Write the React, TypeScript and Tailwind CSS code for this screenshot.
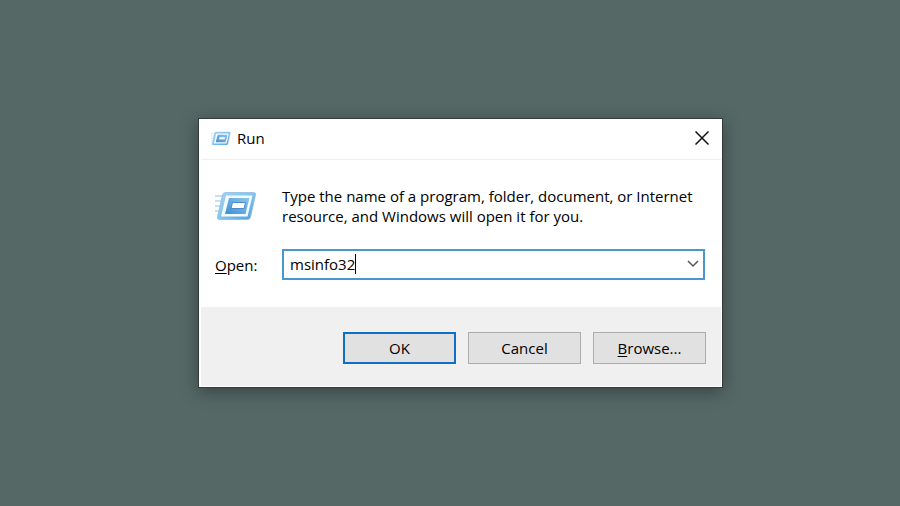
import { useState } from "react";

function RunIcon({ className }: { className: string }) {
  return (
    <svg viewBox="0 0 42 30" className={className} fill="none" aria-hidden>
      <defs>
        <linearGradient id="run-rim" x1="0" y1="0" x2="1" y2="1">
          <stop offset="0" stopColor="#a6d3f2" />
          <stop offset="0.5" stopColor="#84c3ec" />
          <stop offset="1" stopColor="#4b9cdb" />
        </linearGradient>
        <linearGradient id="run-face" x1="1" y1="0" x2="0" y2="1">
          <stop offset="0" stopColor="#8cc6ee" />
          <stop offset="1" stopColor="#3d8fd4" />
        </linearGradient>
      </defs>
      <path d="M0 5h9M0 10h8M0 15h6M0 20h5" stroke="#b4d8f2" strokeWidth="1.300" />
      <path
        d="M10.500 1.500h28q2.500 0 2 2.500l-5 22q-.6 2.500-3 2.500H4.500q-2.500 0-2-2.500l5-22q.6-2.500 3-2.500z"
        fill="url(#run-rim)"
        stroke="#8bbfe6"
        strokeWidth="0.8"
      />
      <path d="M11 4.500h26.500L32.500 25.500H6z" fill="#f3fbff" />
      <path d="M14 7h20.500L30.500 23H10z" fill="url(#run-face)" />
      <path d="M17.500 11.500h13l-1.500 6H16z" fill="#fff" stroke="#5089c8" strokeWidth="1" />
    </svg>
  );
}

const buttonClass =
  "h-8 w-[113px] border border-[#adadad] bg-[#e1e1e1] text-black";

export default function App() {
  const [command, setCommand] = useState("msinfo32");

  return (
    <main className="flex min-h-screen items-center justify-center bg-[#556866] pl-[21px] font-['Open_Sans','Noto_Sans',sans-serif] text-[15px] leading-5 text-black">
      <section
        role="dialog"
        aria-labelledby="run-title"
        className="w-full max-w-[525px] border border-[#303b3a] bg-white pr-px pb-px pl-0.5 shadow-[0_4px_16px_rgba(0,0,0,0.35)]"
      >
        <header className="flex h-[41px] items-center border-b border-[#f0f0f0] pr-3 pb-0.5 pl-2.5">
          <RunIcon className="h-[15px] w-5" />
          <h1 id="run-title" className="ml-1.5">
            Run
          </h1>
          <button type="button" aria-label="Close" className="ml-auto">
            <svg viewBox="0 0 14 14" className="size-3.5" fill="none" aria-hidden>
              <path d="M.5.5l13 13M13.500.5l-13 13" stroke="#111" strokeWidth="1.500" />
            </svg>
          </button>
        </header>

        <form onSubmit={(event) => event.preventDefault()}>
          <div className="grid grid-cols-[67px_1fr] items-center gap-y-[23px] pt-[26px] pr-4 pb-[27px] pl-3.5">
            <RunIcon className="h-[30px] w-[42px]" />
            <p className="max-w-[420px]">
              Type the name of a program, folder, document, or Internet resource,
              and Windows will open it for you.
            </p>
            <label htmlFor="command">
              <span className="underline underline-offset-2">O</span>pen:
            </label>
            <div className="flex h-[31px] items-center border-2 border-[#4a97d0] pr-1 pb-0.5 pl-1.5">
              <input
                id="command"
                type="text"
                value={command}
                onChange={(event) => setCommand(event.target.value)}
                className="field-sizing-content caret-transparent outline-none"
              />
              <span className="h-5 w-px bg-black" />
              <button type="button" aria-label="Show history" className="ml-auto">
                <svg viewBox="0 0 12 8" className="h-2 w-3" fill="none" aria-hidden>
                  <path d="M1 1l5 5 5-5" stroke="#555" strokeWidth="1.500" />
                </svg>
              </button>
            </div>
          </div>

          <footer className="flex justify-end gap-3 bg-[#f0f0f0] pt-[25px] pr-[15px] pb-[22px]">
            <button
              type="submit"
              className="h-8 w-[113px] border-2 border-[#0f6fc6] bg-[#e1e1e1] text-black"
            >
              OK
            </button>
            <button type="button" className={buttonClass}>
              Cancel
            </button>
            <button type="button" className={buttonClass}>
              <span className="underline underline-offset-2">B</span>rowse...
            </button>
          </footer>
        </form>
      </section>
    </main>
  );
}
